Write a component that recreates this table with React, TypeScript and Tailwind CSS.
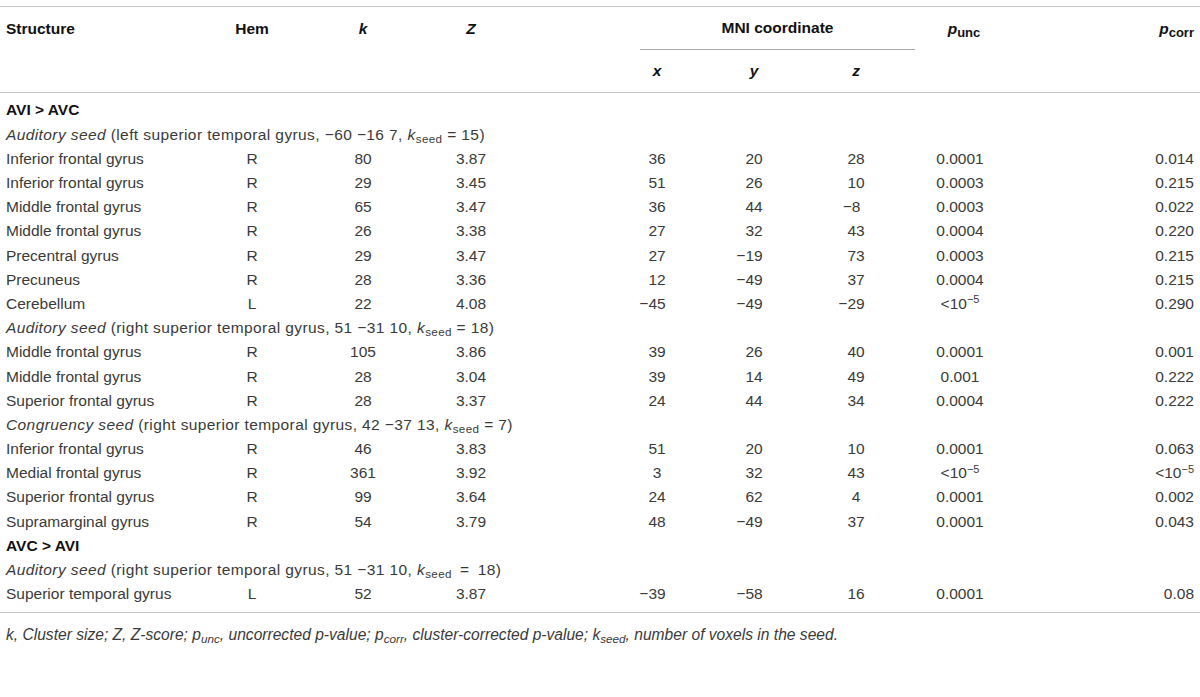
import type { ReactNode } from "react";

type DataRow = {
  kind: "data";
  s: string;
  h: string;
  k: string;
  z: string;
  x: string;
  y: string;
  zc: string;
  pu: string;
  pc: string;
};
type Row = { kind: "group"; label: string } | { kind: "seed"; node: ReactNode } | DataRow;

const grid =
  "grid grid-cols-[195px_114px_108px_108px_82px_100px_94px_110px_98px_191px] items-center";

function seed(name: string, rest: string, k: string, wide = false) {
  return (
    <>
      <i>{name}</i> ({rest}, <i>k</i>
      <sub className="not-italic">seed</sub>
      {wide ? "\u2002=\u2002" : " = "}
      {k})
    </>
  );
}

function d(s: string, h: string, k: string, z: string, x: string, y: string, zc: string, pu: string, pc: string): DataRow {
  return { kind: "data", s, h, k, z, x, y, zc, pu, pc };
}

const rows: Row[] = [
  { kind: "group", label: "AVI > AVC" },
  { kind: "seed", node: seed("Auditory seed", "left superior temporal gyrus, −60 −16 7", "15") },
  d("Inferior frontal gyrus", "R", "80", "3.87", "36", "20", "28", "0.0001", "0.014"),
  d("Inferior frontal gyrus", "R", "29", "3.45", "51", "26", "10", "0.0003", "0.215"),
  d("Middle frontal gyrus", "R", "65", "3.47", "36", "44", "−8", "0.0003", "0.022"),
  d("Middle frontal gyrus", "R", "26", "3.38", "27", "32", "43", "0.0004", "0.220"),
  d("Precentral gyrus", "R", "29", "3.47", "27", "−19", "73", "0.0003", "0.215"),
  d("Precuneus", "R", "28", "3.36", "12", "−49", "37", "0.0004", "0.215"),
  d("Cerebellum", "L", "22", "4.08", "−45", "−49", "−29", "<", "0.290"),
  { kind: "seed", node: seed("Auditory seed", "right superior temporal gyrus, 51 −31 10", "18") },
  d("Middle frontal gyrus", "R", "105", "3.86", "39", "26", "40", "0.0001", "0.001"),
  d("Middle frontal gyrus", "R", "28", "3.04", "39", "14", "49", "0.001", "0.222"),
  d("Superior frontal gyrus", "R", "28", "3.37", "24", "44", "34", "0.0004", "0.222"),
  { kind: "seed", node: seed("Congruency seed", "right superior temporal gyrus, 42 −37 13", "7") },
  d("Inferior frontal gyrus", "R", "46", "3.83", "51", "20", "10", "0.0001", "0.063"),
  d("Medial frontal gyrus", "R", "361", "3.92", "3", "32", "43", "<", "<"),
  d("Superior frontal gyrus", "R", "99", "3.64", "24", "62", "4", "0.0001", "0.002"),
  d("Supramarginal gyrus", "R", "54", "3.79", "48", "−49", "37", "0.0001", "0.043"),
  { kind: "group", label: "AVC > AVI" },
  { kind: "seed", node: seed("Auditory seed", "right superior temporal gyrus, 51 −31 10", "18", true) },
  d("Superior temporal gyrus", "L", "52", "3.87", "−39", "−58", "16", "0.0001", "0.08"),
];

// minus sign hangs to the left so the digits stay centred
function Coord({ v }: { v: string }) {
  if (!v.startsWith("−")) return <span>{v}</span>;
  return (
    <span>
      <span className="inline-flex w-0 justify-end">−</span>
      {v.slice(1)}
    </span>
  );
}

function P({ v }: { v: string }) {
  if (v === "<")
    return (
      <span>
        &lt;10<sup className="text-[11px]">−5</sup>
      </span>
    );
  return <span>{v}</span>;
}

export default function App() {
  return (
    <div className="w-[1200px] h-[697px] bg-white pt-[6px] font-['Liberation_Sans',Arial,sans-serif] text-[15.5px] text-[#3a3a3a]">
      <div className="border-t border-[#c4c4c4]">
        {/* header */}
        <div className="border-b border-[#c4c4c4] font-bold text-[#111]">
          <div className={`${grid} h-[43px]`}>
            <div className="pl-[6px]">Structure</div>
            <div className="text-center">Hem</div>
            <div className="text-center italic">k</div>
            <div className="text-center italic">Z</div>
            <div className="col-span-4 self-stretch flex">
              <div className="ml-[115px] w-[275px] shrink-0 border-b border-[#a8a8a8] flex items-center justify-center">
                MNI coordinate
              </div>
            </div>
            <div className="text-center pl-[8px]">
              <i>p</i>
              <sub className="text-[13px]">unc</sub>
            </div>
            <div className="text-right pr-[6px]">
              <i>p</i>
              <sub className="text-[13px]">corr</sub>
            </div>
          </div>
          <div className={`${grid} h-[42px] italic`}>
            <div className="col-span-5" />
            <div className="text-center">x</div>
            <div className="text-center">y</div>
            <div className="text-center">z</div>
          </div>
        </div>

        {/* body */}
        <div className="pt-[5px] pb-[6px] border-b border-[#c4c4c4]">
          {rows.map((r, i) => {
            if (r.kind === "group")
              return (
                <div key={i} className="h-[24.2px] flex items-center pl-[6px] font-bold text-[#111]">
                  {r.label}
                </div>
              );
            if (r.kind === "seed")
              return (
                <div key={i} className="h-[24.2px] flex items-center pl-[6px] whitespace-pre tracking-[0.4px]">
                  <span>{r.node}</span>
                </div>
              );
            return (
              <div key={i} className={`${grid} h-[24.2px]`}>
                <div className="pl-[6px]">{r.s}</div>
                <div className="text-center">{r.h}</div>
                <div className="text-center">{r.k}</div>
                <div className="text-center">{r.z}</div>
                <div />
                <div className="text-center">
                  <Coord v={r.x} />
                </div>
                <div className="text-center">
                  <Coord v={r.y} />
                </div>
                <div className="text-center">
                  <Coord v={r.zc} />
                </div>
                <div className="text-center">
                  <P v={r.pu} />
                </div>
                <div className="text-right pr-[6px]">
                  <P v={r.pc} />
                </div>
              </div>
            );
          })}
        </div>

        {/* footnote */}
        <p className="pt-[12px] pl-[6px] italic text-[15.6px] leading-[20px]">
          k, Cluster size; Z, Z-score; p<sub>unc</sub>, uncorrected p-value; p<sub>corr</sub>, cluster-corrected
          p-value; k<sub>seed</sub>, number of voxels in the seed.
        </p>
      </div>
    </div>
  );
}
